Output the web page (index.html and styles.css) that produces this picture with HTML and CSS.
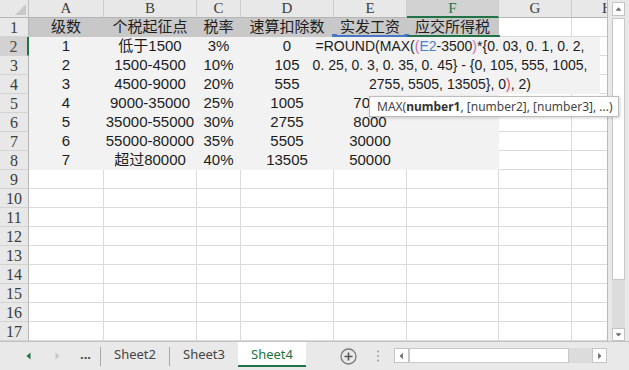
FILE: index.html
```html
<!DOCTYPE html>
<html lang="zh-CN">
<head>
<meta charset="utf-8">
<title>Sheet4</title>
<link rel="stylesheet" href="styles.css">
</head>
<body>
<div class="app">
  <div class="main">
    <div class="sheet">
      <div class="row hdr">
        <div class="corner"><svg width="29" height="18" viewBox="0 0 29 18"><polygon points="26,4 26,15 15,15" fill="#c9c9c9"/></svg></div>
        <div class="ch">A</div><div class="ch">B</div><div class="ch">C</div><div class="ch">D</div><div class="ch">E</div><div class="ch sel">F</div><div class="ch">G</div><div class="ch">H</div>
      </div>
      <div class="row">
        <div class="rh">1</div><div class="c f1">级数</div><div class="c f1">个税起征点</div><div class="c f1">税率</div><div class="c f1">速算扣除数</div><div class="c f1">实发工资</div><div class="c f1">应交所得税</div><div class="c"></div><div class="c"></div>
      </div>
      <div class="row">
        <div class="rh sel">2</div><div class="c f2">1</div><div class="c f2">低于1500</div><div class="c f2">3%</div><div class="c f2">0</div><div class="c f2"></div><div class="c f2"></div><div class="c"></div><div class="c"></div>
      </div>
      <div class="row">
        <div class="rh">3</div><div class="c f2">2</div><div class="c f2">1500-4500</div><div class="c f2">10%</div><div class="c f2">105</div><div class="c f2"></div><div class="c f2"></div><div class="c"></div><div class="c"></div>
      </div>
      <div class="row">
        <div class="rh">4</div><div class="c f2">3</div><div class="c f2">4500-9000</div><div class="c f2">20%</div><div class="c f2">555</div><div class="c f2"></div><div class="c f2"></div><div class="c"></div><div class="c"></div>
      </div>
      <div class="row">
        <div class="rh">5</div><div class="c f2">4</div><div class="c f2">9000-35000</div><div class="c f2">25%</div><div class="c f2">1005</div><div class="c f2">7000</div><div class="c f2"></div><div class="c"></div><div class="c"></div>
      </div>
      <div class="row">
        <div class="rh">6</div><div class="c f2">5</div><div class="c f2">35000-55000</div><div class="c f2">30%</div><div class="c f2">2755</div><div class="c f2">8000</div><div class="c f2"></div><div class="c"></div><div class="c"></div>
      </div>
      <div class="row">
        <div class="rh">7</div><div class="c f2">6</div><div class="c f2">55000-80000</div><div class="c f2">35%</div><div class="c f2">5505</div><div class="c f2">30000</div><div class="c f2"></div><div class="c"></div><div class="c"></div>
      </div>
      <div class="row">
        <div class="rh">8</div><div class="c f2">7</div><div class="c f2">超过80000</div><div class="c f2">40%</div><div class="c f2">13505</div><div class="c f2">50000</div><div class="c f2"></div><div class="c"></div><div class="c"></div>
      </div>
      <div class="row"><div class="rh">9</div><div class="c"></div><div class="c"></div><div class="c"></div><div class="c"></div><div class="c"></div><div class="c"></div><div class="c"></div><div class="c"></div></div>
      <div class="row"><div class="rh">10</div><div class="c"></div><div class="c"></div><div class="c"></div><div class="c"></div><div class="c"></div><div class="c"></div><div class="c"></div><div class="c"></div></div>
      <div class="row"><div class="rh">11</div><div class="c"></div><div class="c"></div><div class="c"></div><div class="c"></div><div class="c"></div><div class="c"></div><div class="c"></div><div class="c"></div></div>
      <div class="row"><div class="rh">12</div><div class="c"></div><div class="c"></div><div class="c"></div><div class="c"></div><div class="c"></div><div class="c"></div><div class="c"></div><div class="c"></div></div>
      <div class="row"><div class="rh">13</div><div class="c"></div><div class="c"></div><div class="c"></div><div class="c"></div><div class="c"></div><div class="c"></div><div class="c"></div><div class="c"></div></div>
      <div class="row"><div class="rh">14</div><div class="c"></div><div class="c"></div><div class="c"></div><div class="c"></div><div class="c"></div><div class="c"></div><div class="c"></div><div class="c"></div></div>
      <div class="row"><div class="rh">15</div><div class="c"></div><div class="c"></div><div class="c"></div><div class="c"></div><div class="c"></div><div class="c"></div><div class="c"></div><div class="c"></div></div>
      <div class="row"><div class="rh">16</div><div class="c"></div><div class="c"></div><div class="c"></div><div class="c"></div><div class="c"></div><div class="c"></div><div class="c"></div><div class="c"></div></div>
      <div class="row"><div class="rh">17</div><div class="c"></div><div class="c"></div><div class="c"></div><div class="c"></div><div class="c"></div><div class="c"></div><div class="c"></div><div class="c"></div></div>
    </div>
    <div class="vscroll">
      <div class="vbtn up"><svg width="13" height="14" viewBox="0 0 13 14"><polygon points="3,9 10,9 6.5,5" fill="#6d6d6d"/></svg></div>
      <div class="vthumb"></div>
      <div class="vtrack"></div>
      <div class="vbtn down"><svg width="13" height="13" viewBox="0 0 13 13"><polygon points="3,5 10,5 6.5,9" fill="#6d6d6d"/></svg></div>
    </div>
  </div>
  <div class="tabbar">
    <div class="nav"><svg width="8" height="8" viewBox="0 0 8 8"><polygon points="5.5,0.5 5.5,7.5 1.5,4" fill="#217346"/></svg></div>
    <div class="nav"><svg width="8" height="8" viewBox="0 0 8 8"><polygon points="2.5,0.5 2.5,7.5 6.5,4" fill="#c8c8c8"/></svg></div>
    <div class="nav more">...</div>
    <div class="sep"></div>
    <div class="tab">Sheet2</div>
    <div class="sep"></div>
    <div class="tab">Sheet3</div>
    <div class="tab active">Sheet4</div>
    <div class="add"><svg width="17" height="17" viewBox="0 0 17 17"><circle cx="8.5" cy="8.5" r="7.5" fill="none" stroke="#7a7a7a" stroke-width="1.3"/><path d="M8.5 4.5v8M4.5 8.5h8" stroke="#555" stroke-width="1.6"/></svg></div>
    <div class="dots"><svg width="4" height="12" viewBox="0 0 4 12"><circle cx="2" cy="1.5" r="1" fill="#9a9a9a"/><circle cx="2" cy="6" r="1" fill="#9a9a9a"/><circle cx="2" cy="10.5" r="1" fill="#9a9a9a"/></svg></div>
    <div class="hscroll">
      <div class="hbtn"><svg width="14" height="14" viewBox="0 0 14 14"><polygon points="8.5,3.5 8.5,10.5 5,7" fill="#6d6d6d"/></svg></div>
      <div class="hthumb"></div>
      <div class="htrack"></div>
      <div class="hbtn"><svg width="14" height="14" viewBox="0 0 14 14"><polygon points="5.5,3.5 5.5,10.5 9,7" fill="#6d6d6d"/></svg></div>
    </div>
  </div>

  <div class="rng"></div>
  <div class="act"></div>
  <div class="editor">
    <div>=ROUND(MAX(<span class="pk">(</span><span class="bl">E2</span>-3500<span class="pk">)</span>*{0. 03, 0. 1, 0. 2,</div>
    <div>0. 25, 0. 3, 0. 35, 0. 45} - {0, 105, 555, 1005,</div>
    <div>2755, 5505, 13505}, 0<span class="rd">)</span>, 2)</div>
  </div>
  <div class="tip">MAX(<b>number1</b>, [number2], [number3], ...)</div>
</div>
</body>
</html>
```

FILE: styles.css
```css
html, body {
  margin: 0;
  padding: 0;
  background: #ffffff;
}
body {
  width: 629px;
  height: 370px;
  overflow: hidden;
  font-family: "Liberation Sans", "Noto Sans CJK SC", sans-serif;
}
.app {
  position: relative;
  width: 629px;
  height: 370px;
}
.main {
  display: flex;
  height: 341px;
}
.sheet {
  width: 608px;
  height: 341px;
  overflow: hidden;
  box-sizing: border-box;
  border-right: 1px solid #bcbcbc;
  flex: none;
}
.row {
  display: grid;
  grid-template-columns: 29px 75px 93px 44px 93px 73px 92px 73px 72px;
  height: 19px;
}
.row.hdr {
  height: 18px;
}
.row > div {
  box-sizing: border-box;
  border-right: 1px solid #dadada;
  border-bottom: 1px solid #dadada;
  text-align: center;
  white-space: nowrap;
  overflow: hidden;
  font-size: 15px;
  line-height: 18px;
  color: #1c1c1c;
}
.row > .corner {
  background: #e8e8e8;
  border-right-color: #bdbdbd;
  border-bottom-color: #b5b5b5;
}
.corner svg {
  display: block;
}
.row > .ch {
  background: #e8e8e8;
  border-right-color: #cccccc;
  border-bottom-color: #b5b5b5;
  font-family: "Liberation Serif", "DejaVu Serif", serif;
  font-size: 15px;
  line-height: 17px;
  color: #3c3c3c;
}
.row > .ch.sel {
  background: #d2d2d2;
  border-bottom: 2px solid #217346;
  color: #217346;
}
.row > .rh {
  background: #e8e8e8;
  border-right-color: #b5b5b5;
  border-bottom-color: #d3d3d3;
  font-family: "Liberation Serif", "DejaVu Serif", serif;
  font-size: 16px;
  line-height: 19px;
  color: #3c3c3c;
}
.row > .rh.sel {
  background: #d2d2d2;
  border-right: 2px solid #217346;
  color: #4a4a4a;
}
.row > .f1 {
  background: #c8c8c8;
  border-color: #c8c8c8;
}
.row > .f2 {
  background: #f2f2f2;
  border-color: #f2f2f2;
}

.vscroll {
  width: 21px;
  height: 341px;
  box-sizing: border-box;
  padding: 2px 4px 0 4px;
  background: #e8e8e8;
  display: flex;
  flex-direction: column;
  gap: 2px;
}
.vbtn {
  box-sizing: border-box;
  width: 13px;
  height: 14px;
  background: #ffffff;
  border: 1px solid #c4c4c4;
  display: flex;
  align-items: center;
  justify-content: center;
}
.vbtn svg { display: block; }
.vbtn.down { height: 13px; }
.vthumb {
  box-sizing: border-box;
  height: 262px;
  background: #ffffff;
  border: 1px solid #c8c8c8;
}
.vtrack {
  flex: 1;
  background: #dcdcdc;
  margin: -2px 0;
}

.tabbar {
  display: flex;
  align-items: flex-start;
  height: 29px;
  box-sizing: border-box;
  border-top: 1px solid #c2c2c2;
  background: #e9e9e9;
  padding-left: 15px;
  font-family: "Noto Sans", "Open Sans", sans-serif;
  font-size: 13px;
  color: #444444;
}
.nav {
  width: 28px;
  height: 25px;
  display: flex;
  align-items: center;
  justify-content: center;
}
.nav svg { display: block; margin-top: 2px; }
.nav.more {
  width: 29px;
  font-weight: bold;
  color: #444;
  font-size: 13px;
  line-height: 25px;
  letter-spacing: 0;
}
.sep {
  width: 1px;
  height: 19px;
  margin-top: 5px;
  background: #a8a8a8;
}
.tab {
  width: 68px;
  height: 25px;
  line-height: 25px;
  text-align: center;
  flex: none;
}
.tab.active {
  box-sizing: border-box;
  background: #ffffff;
  color: #217346;
  border-bottom: 2px solid #217346;
  line-height: 24px;
}
.add {
  margin-left: 28px;
  width: 28px;
  height: 28px;
  display: flex;
  align-items: center;
  justify-content: center;
}
.add svg { display: block; }
.dots {
  margin-left: 10px;
  width: 12px;
  height: 28px;
  display: flex;
  align-items: center;
  justify-content: center;
}
.dots svg { display: block; }
.hscroll {
  margin-left: 10px;
  margin-top: 6px;
  width: 213px;
  height: 15px;
  display: flex;
}
.hbtn {
  box-sizing: border-box;
  width: 15px;
  height: 15px;
  background: #ffffff;
  border: 1px solid #c4c4c4;
  display: flex;
  align-items: center;
  justify-content: center;
}
.hbtn svg { display: block; }
.hthumb {
  box-sizing: border-box;
  width: 160px;
  background: #ffffff;
  border: 1px solid #c8c8c8;
}
.htrack {
  flex: 1;
  background: #dcdcdc;
}

.rng {
  position: absolute;
  left: 333px;
  top: 35px;
  width: 74px;
  height: 2px;
  background: #4a76c6;
}
.rng::before, .rng::after {
  content: "";
  position: absolute;
  top: -1px;
  width: 5px;
  height: 4px;
  background: #4a76c6;
}
.rng::before { left: -1px; }
.rng::after { right: -2px; }
.act {
  position: absolute;
  left: 407px;
  top: 35px;
  width: 93px;
  height: 2px;
  background: #217346;
}
.editor {
  position: absolute;
  left: 300px;
  top: 37px;
  width: 300px;
  height: 57px;
  background: #f2f2f2;
  text-align: center;
  font-family: "Liberation Sans", "Noto Sans CJK SC", sans-serif;
  font-size: 14px;
  line-height: 19px;
  color: #1c1c1c;
  white-space: nowrap;
}
.pk { color: #c86fb4; }
.bl { color: #4f7fcf; }
.rd { color: #d9485f; }
.tip {
  position: absolute;
  left: 369px;
  top: 96px;
  height: 21px;
  box-sizing: border-box;
  padding: 0 5px 0 7px;
  background: #ffffff;
  border: 1px solid #bdbdbd;
  box-shadow: 1px 1px 3px rgba(0, 0, 0, 0.18);
  font-family: "Noto Sans", "Open Sans", sans-serif;
  font-size: 12px;
  line-height: 19px;
  color: #444444;
  white-space: nowrap;
}
.tip b {
  color: #333;
}
```
